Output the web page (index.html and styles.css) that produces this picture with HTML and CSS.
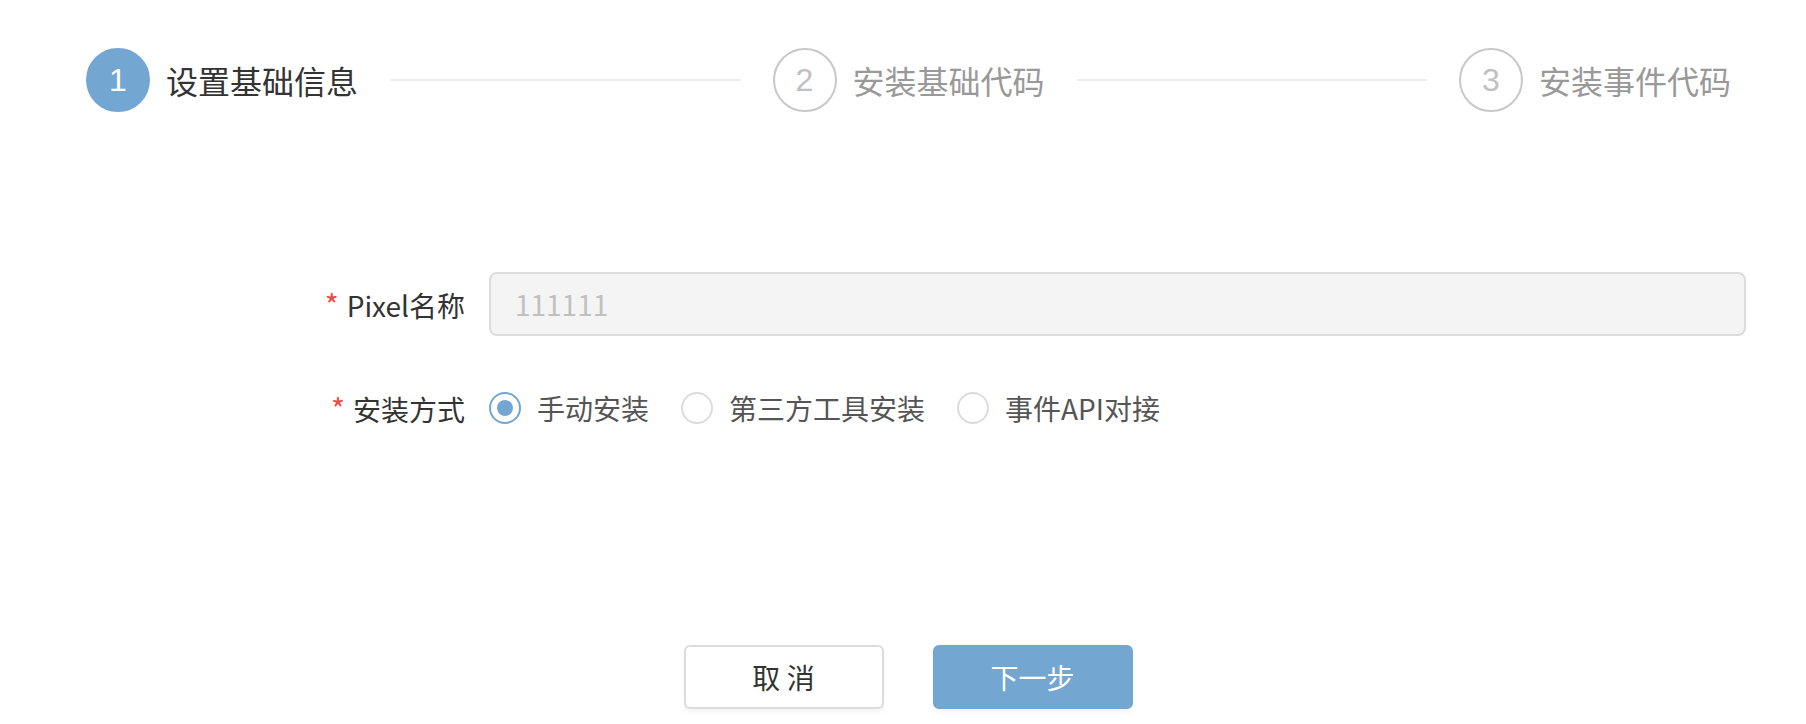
FILE: index.html
```html
<!DOCTYPE html>
<html lang="zh-CN">
<head>
<meta charset="utf-8">
<title>Pixel</title>
<link rel="stylesheet" href="styles.css">
</head>
<body>
<div class="page">
  <div class="steps">
    <div class="step step-active">
      <span class="step-icon">1</span>
      <span class="step-title">设置基础信息</span>
    </div>
    <div class="step-line"></div>
    <div class="step">
      <span class="step-icon">2</span>
      <span class="step-title">安装基础代码</span>
    </div>
    <div class="step-line"></div>
    <div class="step">
      <span class="step-icon">3</span>
      <span class="step-title">安装事件代码</span>
    </div>
  </div>

  <form class="form">
    <div class="form-item">
      <label class="form-label"><span class="req">*</span>Pixel名称</label>
      <div class="form-control">
        <div class="input input-disabled">111111</div>
      </div>
    </div>
    <div class="form-item">
      <label class="form-label"><span class="req">*</span>安装方式</label>
      <div class="form-control radios">
        <span class="radio radio-checked"><span class="radio-dot"></span><span class="radio-label">手动安装</span></span>
        <span class="radio"><span class="radio-dot"></span><span class="radio-label">第三方工具安装</span></span>
        <span class="radio"><span class="radio-dot"></span><span class="radio-label">事件API对接</span></span>
      </div>
    </div>
  </form>

  <div class="actions">
    <button type="button" class="btn btn-default">取 消</button>
    <button type="button" class="btn btn-primary">下一步</button>
  </div>
</div>
</body>
</html>
```

FILE: styles.css
```css
* { box-sizing: border-box; }
html, body { margin: 0; padding: 0; background: #fff; }
body {
  font-family: "Noto Sans CJK SC", "Noto Sans", sans-serif;
  color: #333;
  width: 1806px;
  height: 724px;
  overflow: hidden;
}

.steps {
  display: flex;
  align-items: center;
  padding: 48px 75px 0 86px;
  height: 112px;
}
.step {
  display: flex;
  align-items: center;
  flex: none;
}
.step-icon {
  width: 64px;
  height: 64px;
  border-radius: 50%;
  border: 2px solid #c8c8c8;
  color: #c0c0c0;
  display: flex;
  align-items: center;
  justify-content: center;
  font-family: "Liberation Sans", Arial, sans-serif;
  font-size: 32px;
  line-height: 1;
}
.step-title {
  margin-left: 16px;
  font-size: 32px;
  line-height: 64px;
  color: #999;
}
.step-active .step-icon {
  background: #73a6d1;
  border-color: #73a6d1;
  color: #fff;
}
.step-active .step-title { color: #333; }
.step-line {
  flex: 1;
  height: 2px;
  background: #ededed;
  margin: 0 32px;
}

.form {
  margin-top: 160px;
  padding: 0 60px 0 265px;
}
.form-item {
  display: flex;
  align-items: center;
  height: 64px;
}
.form-item + .form-item { margin-top: 40px; }
.form-label {
  width: 224px;
  flex: none;
  padding-right: 24px;
  text-align: right;
  font-size: 28px;
  line-height: 64px;
  color: #333;
}
.req {
  color: #f04b4b;
  margin-right: 8px;
  font-size: 30px;
}
.form-control {
  flex: 1;
  display: flex;
  align-items: center;
}
.input {
  width: 100%;
  height: 64px;
  border: 2px solid #dcdcdc;
  border-radius: 8px;
  padding: 0 24px;
  font-size: 28px;
  line-height: 60px;
  color: #c0c0c0;
}
.input-disabled { background: #f4f4f4; }

.radios { gap: 32px; }
.radio {
  display: inline-flex;
  align-items: center;
}
.radio-dot {
  width: 32px;
  height: 32px;
  border-radius: 50%;
  border: 2px solid #dcdcdc;
  background: #fff;
  display: inline-flex;
  align-items: center;
  justify-content: center;
}
.radio-checked .radio-dot { border-color: #73a6d1; }
.radio-checked .radio-dot::after {
  content: "";
  width: 16px;
  height: 16px;
  border-radius: 50%;
  background: #73a6d1;
}
.radio-label {
  margin-left: 16px;
  font-size: 28px;
  line-height: 64px;
  color: #555;
}

.actions {
  display: flex;
  justify-content: center;
  gap: 49px;
  margin-top: 205px;
  padding-left: 10px;
}
.btn {
  width: 200px;
  height: 64px;
  border-radius: 6px;
  font-family: "Noto Sans CJK SC", sans-serif;
  font-size: 28px;
  cursor: pointer;
  box-shadow: 0 4px 4px rgba(0, 0, 0, 0.04);
}
.btn-default {
  background: #fff;
  border: 2px solid #dcdcdc;
  color: #333;
}
.btn-primary {
  background: #73a6d1;
  border: 2px solid #73a6d1;
  color: #fff;
}
```
